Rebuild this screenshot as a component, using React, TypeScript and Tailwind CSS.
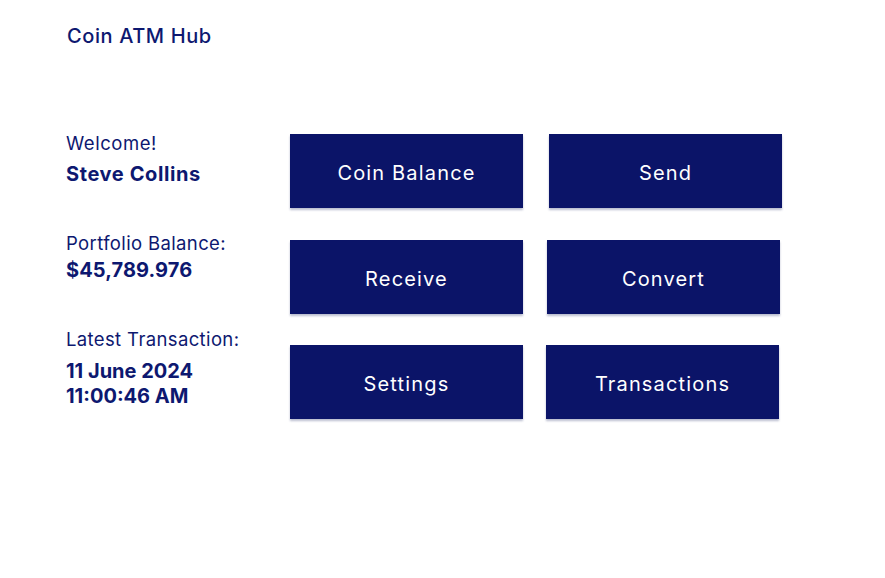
import React from "react";

function Btn({ label, className = "" }: { label: string; className?: string }) {
  return (
    <div
      className={
        "w-[233px] h-[74px] bg-[#0b1468] text-white flex items-center justify-center pt-[4px] text-[20px] leading-[24px] tracking-[0.058em] shadow-[0_2px_2px_rgba(60,70,120,0.35)] " +
        className
      }
    >
      {label}
    </div>
  );
}

export default function App() {
  return (
    <div className="w-[885px] h-[578px] bg-white font-['Inter',sans-serif] text-[#0d1870]">
      <div className="pl-[67px] pt-[24px] text-[20px] leading-[24px] font-medium tracking-[0.03em]">Coin ATM Hub</div>
      <div className="flex items-start mt-[78px] pl-[66px]">
        <div className="w-[224px] flex flex-col pt-[6px]">
          <div className="text-[18.5px] leading-[22px] tracking-[0.03em]">Welcome!</div>
          <div className="mt-[8px] text-[20px] leading-[24px] font-bold tracking-[0.03em]">Steve Collins</div>
          <div className="mt-[46px] text-[18.5px] leading-[22px] tracking-[0.02em]">Portfolio Balance:</div>
          <div className="mt-[4px] text-[20px] leading-[24px] font-bold tracking-[0.005em]">$45,789.976</div>
          <div className="mt-[46px] text-[18.5px] leading-[22px] tracking-[0.02em]">Latest Transaction:</div>
          <div className="mt-[9px] text-[20px] leading-[25px] font-bold">
            11 June 2024
            <br />
            11:00:46 AM
          </div>
        </div>
        <div className="flex flex-col pt-[8px]">
          <div className="flex gap-[26px]">
            <Btn label="Coin Balance" />
            <Btn label="Send" />
          </div>
          <div className="flex gap-[24px] mt-[32px]">
            <Btn label="Receive" />
            <Btn label="Convert" />
          </div>
          <div className="flex gap-[23px] mt-[31px]">
            <Btn label="Settings" />
            <Btn label="Transactions" />
          </div>
        </div>
      </div>
    </div>
  );
}
